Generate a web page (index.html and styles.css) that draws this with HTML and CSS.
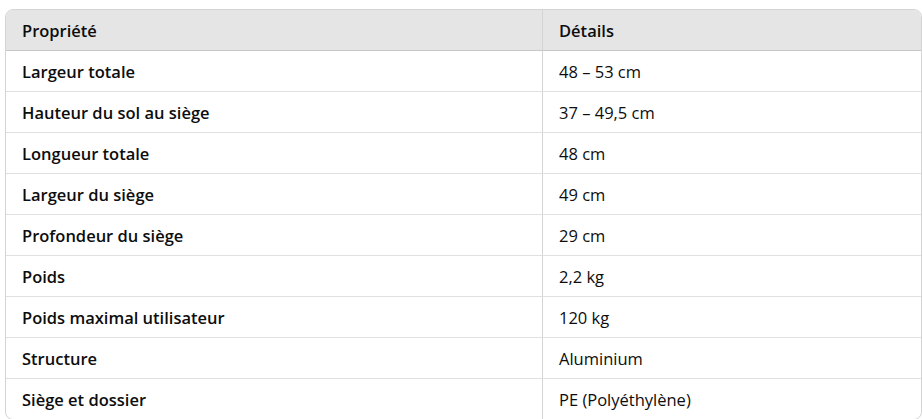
FILE: index.html
```html
<!DOCTYPE html>
<html lang="fr">
<head>
<meta charset="utf-8">
<link rel="stylesheet" href="styles.css">
</head>
<body>
<div class="wrap">
<table class="specs">
<colgroup><col class="c1"><col class="c2"></colgroup>
<thead>
<tr><th>Propriété</th><th>Détails</th></tr>
</thead>
<tbody>
<tr><td class="k">Largeur totale</td><td>48 – 53 cm</td></tr>
<tr><td class="k">Hauteur du sol au siège</td><td>37 – 49,5 cm</td></tr>
<tr><td class="k">Longueur totale</td><td>48 cm</td></tr>
<tr><td class="k">Largeur du siège</td><td>49 cm</td></tr>
<tr><td class="k">Profondeur du siège</td><td>29 cm</td></tr>
<tr><td class="k">Poids</td><td>2,2 kg</td></tr>
<tr><td class="k">Poids maximal utilisateur</td><td>120 kg</td></tr>
<tr><td class="k">Structure</td><td>Aluminium</td></tr>
<tr><td class="k">Siège et dossier</td><td>PE (Polyéthylène)</td></tr>
</tbody>
</table>
</div>
</body>
</html>
```
FILE: styles.css
```css
html, body {
  margin: 0;
  padding: 0;
  background: #ffffff;
}
.wrap {
  padding: 9px 0 0 5px;
}
.specs {
  width: 917px;
  border-collapse: separate;
  border-spacing: 0;
  border: 1px solid #d4d4d4;
  border-radius: 8px;
  overflow: hidden;
  table-layout: fixed;
  font-family: "Open Sans", "Noto Sans", sans-serif;
  font-size: 16.5px;
  color: #0d0d0d;
}
.c1 { width: 536px; }
.specs th, .specs td {
  padding: 2px 16px 0;
  text-align: left;
  vertical-align: middle;
  line-height: 20px;
  box-sizing: border-box;
}
.specs th {
  background: #e5e5e5;
  font-weight: 600;
  height: 41px;
  border-bottom: 1px solid #c7c7c7;
}
.specs td {
  height: 41px;
  border-top: 1px solid #e0e0e0;
  font-weight: 400;
}
.specs tbody tr:first-child td { border-top: none; height: 40px; }
.specs th + th, .specs td + td {
  border-left: 1px solid #d4d4d4;
}
.specs td.k {
  font-weight: 600;
}
```
